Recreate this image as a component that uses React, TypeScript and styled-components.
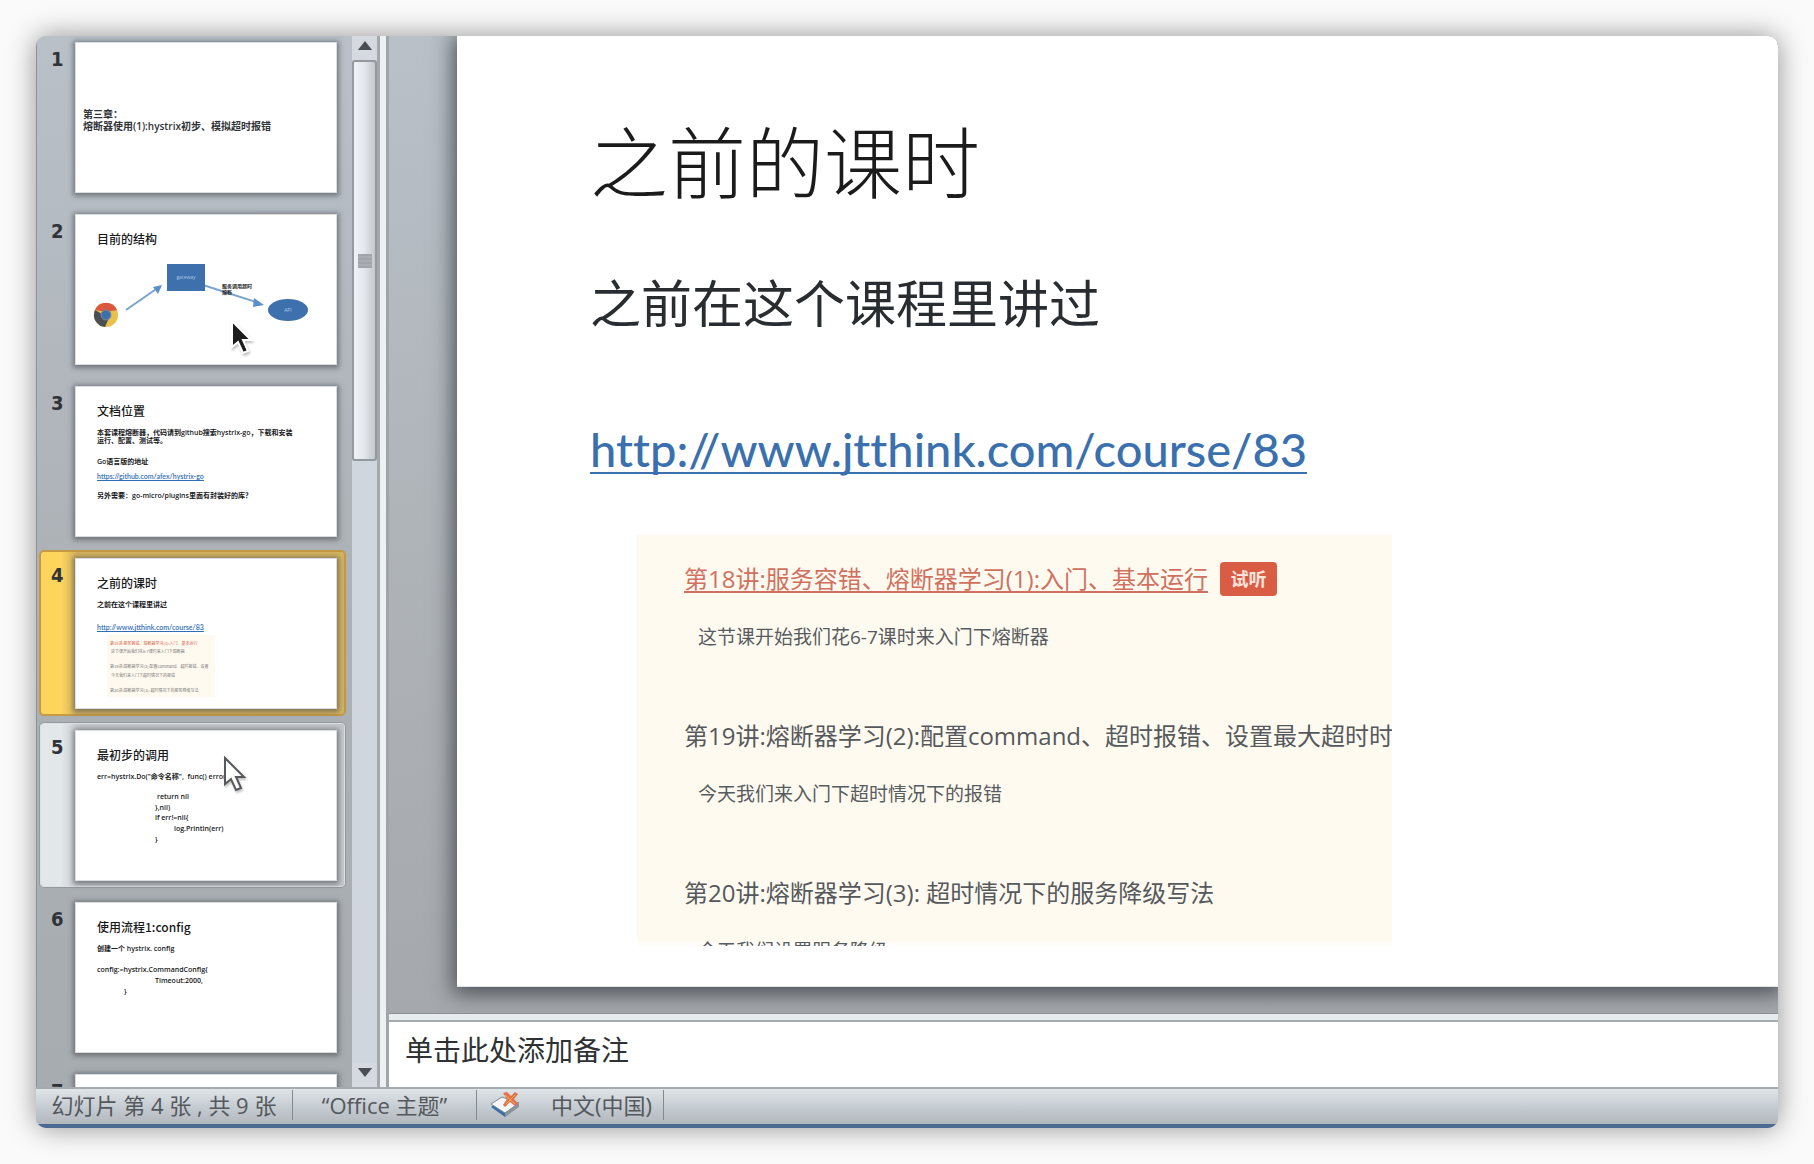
import React from "react";
import styled, { createGlobalStyle } from "styled-components";

const sans = '"Open Sans", "Noto Sans CJK SC", sans-serif';

const GlobalStyle = createGlobalStyle`
  * { box-sizing: border-box; }
  body { margin: 0; background: #fafafa; font-family: ${sans}; }
  h1, h2, h3, p, ol, ul { margin: 0; padding: 0; font-weight: 400; }
  li { list-style: none; }
  button { border: 0; padding: 0; margin: 0; font: inherit; background: none; }
`;

const Page = styled.div`
  height: 100vh;
  padding: 36px;
  display: flex;
`;

const Window = styled.div`
  flex: 1;
  min-width: 0;
  display: flex;
  flex-direction: column;
  overflow: hidden;
  border-radius: 10px;
  background: #b4b9be;
  box-shadow: 0 0 28px rgba(0, 0, 0, 0.42);
`;

const Workspace = styled.div`
  flex: 1;
  min-height: 0;
  display: flex;
`;

/* ---------- slide list ---------- */

const SlideList = styled.ol`
  width: 316px;
  flex: none;
  overflow: hidden;
  display: flex;
  flex-direction: column;
  gap: 10px;
  padding: 0 8px 0 4px;
  border-left: 1px solid #8d9298;
  background: linear-gradient(#b9c0c8, #adb2b7 50%, #a7acb1);
`;

const Item = styled.li<{ $state?: "active" | "hover" }>`
  flex: none;
  border-radius: 3px;
  background: ${(p) =>
    p.$state === "active"
      ? "linear-gradient(90deg, #fdd45c 20px, #d3b35f 36px)"
      : p.$state === "hover"
      ? "linear-gradient(90deg, #e2e7ea 20px, #c4c8cb 40px)"
      : "none"};
  box-shadow: ${(p) =>
    p.$state === "active"
      ? "0 0 0 2px #c49a45"
      : p.$state === "hover"
      ? "0 0 0 1px #dde1e4, 0 0 0 2px #94999e"
      : "none"};
`;

const ItemButton = styled.button`
  width: 100%;
  display: flex;
  align-items: flex-start;
  padding: 7px 8px 6px 0;
  text-align: left;
  color: #303337;
`;

const Num = styled.span`
  width: 35px;
  flex: none;
  padding: 4px 0 0 10px;
  font: bold 20px/24px "DejaVu Sans Condensed", "DejaVu Sans", sans-serif;
`;

const Thumb = styled.span`
  flex: 1;
  min-width: 0;
  height: 149px;
  padding: 15px 10px 0 21px;
  display: flex;
  flex-direction: column;
  background: #fff;
  box-shadow: 0 0 0 1px #d9dde0, 0 1px 5px 3px rgba(70, 75, 80, 0.6);
  overflow: hidden;
  white-space: pre;
`;

const ThumbTitle = styled.span`
  font: 500 12px/18px "Noto Sans CJK SC", sans-serif;
  color: #17191b;
`;

const ThumbLine = styled.span<{ $gap?: number; $indent?: number; $link?: boolean }>`
  font: 600 7px/8px ${(p) => (p.$link ? "Lato" : '"Open Sans"')}, "Noto Sans CJK SC", sans-serif;
  margin-top: ${(p) => p.$gap || 0}px;
  margin-left: ${(p) => p.$indent || 0}px;
  color: ${(p) => (p.$link ? "#2f6db5" : "#17191b")};
  text-decoration: ${(p) => (p.$link ? "underline" : "none")};
`;

const Cover = styled.span`
  margin: 50px -10px 0 -14px;
  display: flex;
  flex-direction: column;
  font: 600 10px/12px "Open Sans", "Noto Sans CJK SC", sans-serif;
`;

const Diagram = styled.svg`
  display: block;
  width: 230px;
  height: 90px;
  margin-left: -4px;
`;

const MiniPanel = styled.span`
  width: 108px;
  margin: 4px 0 0 10px;
  padding: 3px 0 0 3px;
  height: 62px;
  display: flex;
  flex-direction: column;
  background: #fffaf0;
`;

const MiniText = styled.span<{ $gap?: number; $red?: boolean }>`
  font: 4px/6px "Noto Sans CJK SC", sans-serif;
  margin-top: ${(p) => p.$gap || 0}px;
  color: ${(p) => (p.$red ? "#d0604c" : "#777")};
`;

/* ---------- scrollbar and splitters ---------- */

const Scroll = styled.div`
  width: 25px;
  flex: none;
  display: flex;
  flex-direction: column;
  background: #cfd6dd;
`;

const ArrowButton = styled.button`
  height: 24px;
  flex: none;
  display: grid;
  place-items: center;
  padding-bottom: 5px;
  background: #d4dadf;
`;

const Track = styled.div`
  flex: 1;
`;

const ScrollThumb = styled.div`
  height: 40%;
  display: grid;
  place-items: center;
  border: 2px solid #94999e;
  border-radius: 3px;
  background: linear-gradient(90deg, #f0f3f5, #e3e7eb 50%, #c3c8cd);
`;

const Grip = styled.span`
  width: 14px;
  height: 14px;
  background: repeating-linear-gradient(#a0a5a9 0 2px, #aaaeb2 2px 4px);
`;

const VSplit = styled.div`
  width: 12px;
  flex: none;
  border-left: 3px solid #a3a8ad;
  border-right: 3px solid #a0a5aa;
  background: #edf1f4;
`;

const HSplit = styled.div`
  height: 9px;
  flex: none;
  border-top: 1px solid #8b9095;
  border-bottom: 2px solid #a6abaf;
  background: #e7ecef;
`;

/* ---------- slide editor ---------- */

const Editor = styled.main`
  flex: 1;
  min-width: 0;
  display: flex;
  flex-direction: column;
`;

const Canvas = styled.div`
  flex: 1;
  min-height: 0;
  display: flex;
  padding: 0 0 26px 68px;
  overflow: hidden;
  background: linear-gradient(#b9c0c8, #afb4b9 50%, #a5a9ad);
`;

const Slide = styled.article`
  flex: 1;
  min-width: 0;
  padding: 77px 0 0 133px;
  background: #fff;
  border-bottom: 1px solid #dfe4e7;
  box-shadow: 0 3px 20px 4px rgba(60, 65, 70, 0.85);
`;

const Title = styled.h1`
  font: 300 78px/92px "Noto Sans CJK SC", sans-serif;
  color: #1b1b1b;
`;

const Lead = styled.p`
  margin-top: 66px;
  font: 400 51px/60px "Noto Sans CJK SC", sans-serif;
  color: #2a2d30;
`;

const CourseLink = styled.a`
  display: block;
  width: max-content;
  margin-top: 88px;
  font: 500 47px/60px Lato, sans-serif;
  font-variant-ligatures: none;
  color: #3a70ae;
  text-decoration: underline;
  text-decoration-thickness: 2px;
  text-underline-offset: 5px;
  text-decoration-skip-ink: none;
`;

const Lessons = styled.section`
  width: 755px;
  height: 411px;
  margin: 56px 0 0 47px;
  padding: 28px 0 0 47px;
  display: flex;
  flex-direction: column;
  gap: 67px;
  overflow: hidden;
  white-space: nowrap;
  background: linear-gradient(#fffaf0 406px, #fffdf9 408px);
`;

const Lesson = styled.div`
  display: flex;
  flex-direction: column;
  gap: 26px;
`;

const LessonHead = styled.div`
  display: flex;
  align-items: center;
  gap: 12px;
  height: 32px;
`;

const LessonTitle = styled.h2`
  font: 24px/32px ${sans};
  color: #55595d;
`;

const LessonLink = styled.a`
  font: 24px/32px ${sans};
  color: #d0715f;
  text-decoration: underline;
  text-decoration-thickness: 2px;
  text-underline-offset: 3px;
  text-decoration-skip-ink: none;
`;

const Badge = styled.button`
  width: 57px;
  height: 34px;
  border-radius: 4px;
  background: #d95d45;
  color: #fbe3dc;
  font: bold 18px/32px ${sans};
`;

const Desc = styled.p`
  margin-left: 14px;
  font: 19px/32px ${sans};
  color: #575c60;
`;

const Notes = styled.textarea`
  height: 65px;
  flex: none;
  display: block;
  width: 100%;
  resize: none;
  border: 0;
  outline: 0;
  margin: 0;
  padding: 10px 16px;
  background: #fff;
  font: 28px/36px ${sans};
  color: #2e3235;
  &::placeholder { color: #2e3235; opacity: 1; }
`;

/* ---------- status bar ---------- */

const Status = styled.footer`
  height: 41px;
  flex: none;
  display: flex;
  align-items: center;
  padding-bottom: 3px;
  border-top: 2px solid #a5aaae;
  border-bottom: 4px solid #4a6a92;
  background: linear-gradient(#dfe4e7, #c3cad0 55%, #b3b8bc);
`;

const Cell = styled.span<{ $w: number }>`
  width: ${(p) => p.$w}px;
  height: 30px;
  flex: none;
  display: flex;
  align-items: center;
  justify-content: center;
  gap: 29px;
  border-right: 1px solid #84898e;
  font: 22px/30px ${sans};
  color: #54585c;
  white-space: nowrap;
`;

/* ---------- pointers ---------- */

const Pointer = styled.svg<{ $x: number; $y: number }>`
  position: absolute;
  left: ${(p) => p.$x}px;
  top: ${(p) => p.$y}px;
  width: 26px;
  height: 38px;
  filter: drop-shadow(1px 2px 1px rgba(0, 0, 0, 0.25));
`;

const arrow = "M3 3V29L9 24L14 35L19 33L14 22H22Z";

function Structure() {
  return (
    <Diagram viewBox="0 0 230 90" aria-label="浏览器、网关与服务">
      <g transform="translate(13 67)">
        <circle r="12" fill="#e8c04a" />
        <path d="M-11-5A12 12 0 0 1 11-5L0-3Z" fill="#d9583f" />
        <path d="M-11-5A12 12 0 0 0-1 12L3 3Z" fill="#4b4f52" />
        <circle r="5" fill="#3d6fae" stroke="#7d8a94" strokeWidth="1" />
      </g>
      <g stroke="#7ba3cc" strokeWidth="2" fill="#5b8fc9">
        <path d="M33 62L66 39" />
        <path d="M69 37L60 39L65 46Z" strokeWidth="0" />
        <path d="M110 37L166 55" />
        <path d="M171 57L161 50L160 59Z" strokeWidth="0" />
      </g>
      <rect x="74" y="16" width="38" height="27" fill="#3d70ad" />
      <ellipse cx="195" cy="62" rx="20" ry="11" fill="#3d70ad" />
      <g fontFamily="Open Sans, sans-serif" textAnchor="middle" fill="#a9c4e4">
        <text x="93" y="31" fontSize="5">gateway</text>
        <text x="195" y="64" fontSize="5">API</text>
      </g>
      <g fontFamily="Noto Sans CJK SC, sans-serif" fontSize="5" fontWeight="700" fill="#222">
        <text x="129" y="40">服务调用超时</text>
        <text x="129" y="46">熔断</text>
      </g>
    </Diagram>
  );
}

function Proofing() {
  return (
    <svg width="34" height="30" viewBox="0 0 34 30" aria-hidden="true">
      <path d="M3 17L16 9L31 16L17 27Z" fill="#3b6ea8" />
      <path d="M3 14L14 7L31 13L17 23Z" fill="#f4f6f8" stroke="#7c8790" strokeWidth="1" />
      <path d="M17 23L31 13V17L17 27Z" fill="#8b949b" />
      <path d="M15 3L19 2L23 6L27 2L30 4L26 9L30 14L27 16L22 12L17 17L15 15L19 9Z" fill="#e2714c" />
      <path d="M17 5L27 14M27 5L18 14" stroke="#f3b04e" strokeWidth="1" />
    </svg>
  );
}

const Triangle = ({ down }: { down?: boolean }) => (
  <svg width="16" height="9" viewBox="0 0 18 10" aria-hidden="true">
    <path d={down ? "M1 0H17L9 10Z" : "M1 10H17L9 0Z"} fill="#4a4e52" />
  </svg>
);

const slides: { state?: "active" | "hover"; body: React.ReactNode }[] = [
  {
    body: (
      <Cover>
        <span>第三章：</span>
        <span>熔断器使用(1):hystrix初步、模拟超时报错</span>
      </Cover>
    ),
  },
  { body: <><ThumbTitle>目前的结构</ThumbTitle><Structure /></> },
  {
    body: (
      <>
        <ThumbTitle>文档位置</ThumbTitle>
        <ThumbLine $gap={9}>本套课程熔断器，代码请到github搜索hystrix-go，下载和安装</ThumbLine>
        <ThumbLine>运行、配置、测试等。</ThumbLine>
        <ThumbLine $gap={13}>Go语言版的地址</ThumbLine>
        <ThumbLine $gap={6} $link>https://github.com/afex/hystrix-go</ThumbLine>
        <ThumbLine $gap={12}>另外需要：go-micro/plugins里面有封装好的库？</ThumbLine>
      </>
    ),
  },
  {
    state: "active",
    body: (
      <>
        <ThumbTitle>之前的课时</ThumbTitle>
        <ThumbLine $gap={9}>之前在这个课程里讲过</ThumbLine>
        <ThumbLine $gap={14} $link>http://www.jtthink.com/course/83</ThumbLine>
        <MiniPanel>
          <MiniText $red $gap={2}>第18讲:服务容错、熔断器学习(1):入门、基本运行</MiniText>
          <MiniText $gap={2}> 这节课开始我们花6-7课时来入门下熔断器</MiniText>
          <MiniText $gap={9}>第19讲:熔断器学习(2):配置command、超时报错、设置</MiniText>
          <MiniText $gap={3}> 今天我们来入门下超时情况下的报错</MiniText>
          <MiniText $gap={9}>第20讲:熔断器学习(3): 超时情况下的服务降级写法</MiniText>
        </MiniPanel>
      </>
    ),
  },
  {
    state: "hover",
    body: (
      <>
        <ThumbTitle>最初步的调用</ThumbTitle>
        <ThumbLine $gap={9}>err=hystrix.Do("命令名称",  func() error</ThumbLine>
        <ThumbLine $gap={12} $indent={60}>return nil</ThumbLine>
        <ThumbLine $gap={3} $indent={58}>&#125;,nil)</ThumbLine>
        <ThumbLine $gap={2} $indent={58}>if err!=nil&#123;</ThumbLine>
        <ThumbLine $gap={3} $indent={77}>log.Println(err)</ThumbLine>
        <ThumbLine $gap={3} $indent={58}>&#125;</ThumbLine>
      </>
    ),
  },
  {
    body: (
      <>
        <ThumbTitle>使用流程1:config</ThumbTitle>
        <ThumbLine $gap={9}>创建一个 hystrix. config</ThumbLine>
        <ThumbLine $gap={13}>config:=hystrix.CommandConfig&#123;</ThumbLine>
        <ThumbLine $gap={3} $indent={58}>Timeout:2000,</ThumbLine>
        <ThumbLine $gap={3} $indent={27}>&#125;</ThumbLine>
      </>
    ),
  },
  { body: null },
];

export default function App() {
  return (
    <>
      <GlobalStyle />
      <Page>
        <Window>
          <Workspace>
            <SlideList>
              {slides.map((s, i) => (
                <Item key={i} $state={s.state}>
                  <ItemButton aria-current={s.state === "active" || undefined}>
                    <Num>{i + 1}</Num>
                    <Thumb>{s.body}</Thumb>
                  </ItemButton>
                </Item>
              ))}
            </SlideList>
            <Scroll>
              <ArrowButton aria-label="向上滚动"><Triangle /></ArrowButton>
              <Track>
                <ScrollThumb><Grip /></ScrollThumb>
              </Track>
              <ArrowButton aria-label="向下滚动"><Triangle down /></ArrowButton>
            </Scroll>
            <VSplit />
            <Editor>
              <Canvas>
                <Slide>
                  <Title>之前的课时</Title>
                  <Lead>之前在这个课程里讲过</Lead>
                  <CourseLink href="#course-83">http://www.jtthink.com/course/83</CourseLink>
                  <Lessons>
                    <Lesson>
                      <LessonHead>
                        <LessonLink href="#lesson-18">第18讲:服务容错、熔断器学习(1):入门、基本运行</LessonLink>
                        <Badge>试听</Badge>
                      </LessonHead>
                      <Desc>这节课开始我们花6-7课时来入门下熔断器</Desc>
                    </Lesson>
                    <Lesson>
                      <LessonTitle>第19讲:熔断器学习(2):配置command、超时报错、设置最大超时时间</LessonTitle>
                      <Desc>今天我们来入门下超时情况下的报错</Desc>
                    </Lesson>
                    <Lesson>
                      <LessonTitle>第20讲:熔断器学习(3): 超时情况下的服务降级写法</LessonTitle>
                      <Desc>今天我们设置服务降级</Desc>
                    </Lesson>
                  </Lessons>
                </Slide>
              </Canvas>
              <HSplit />
              <Notes aria-label="备注" placeholder="单击此处添加备注" />
            </Editor>
          </Workspace>
          <Status>
            <Cell $w={257}>幻灯片 第 4 张 , 共 9 张</Cell>
            <Cell $w={184}>“Office 主题”</Cell>
            <Cell $w={187}><Proofing />中文(中国)</Cell>
          </Status>
        </Window>
      </Page>
      <Pointer $x={229} $y={318} viewBox="0 0 26 38" aria-hidden="true">
        <path d={arrow} fill="#1c1c1c" stroke="#fff" strokeWidth="2" />
      </Pointer>
      <Pointer $x={222} $y={755} viewBox="0 0 26 38" aria-hidden="true">
        <path d={arrow} fill="#fff" stroke="#55595d" strokeWidth="2" />
      </Pointer>
    </>
  );
}
